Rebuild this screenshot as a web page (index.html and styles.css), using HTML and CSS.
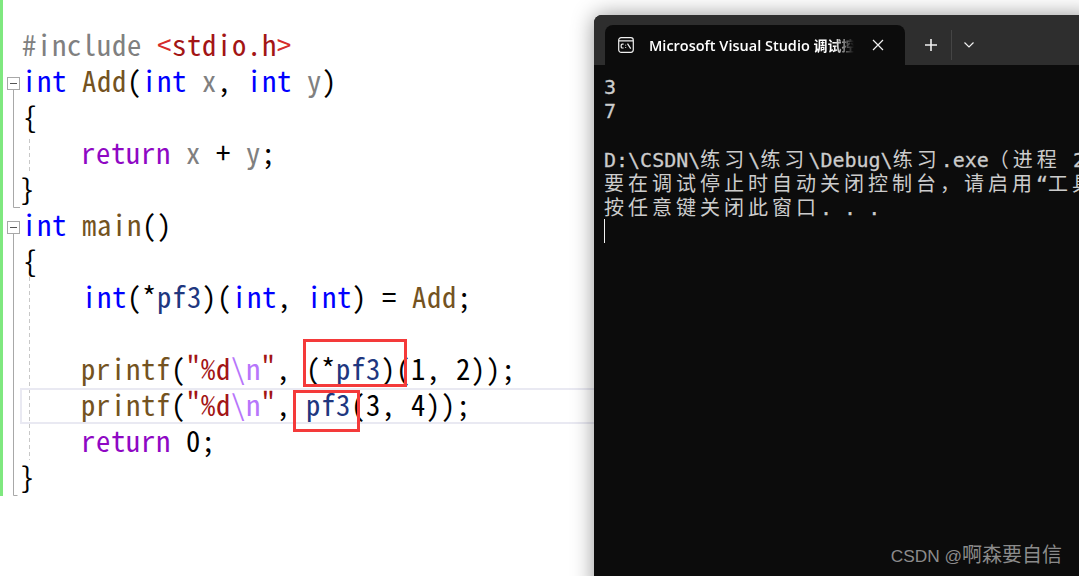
FILE: index.html
```html
<!DOCTYPE html>
<html lang="zh">
<head>
<meta charset="utf-8">
<title>Debug</title>
<link rel="stylesheet" href="styles.css">
</head>
<body>
<main class="desk">
  <section class="editor">
    <svg class="gutter" width="40" height="500" viewBox="0 0 40 500" aria-hidden="true">
      <rect x="7.5" y="77.5" width="12" height="12" class="fold"/>
      <path d="M10 83.5h7" class="dash"/>
      <path d="M13.5 90v117.500h6.500" class="fold"/>
      <rect x="7.5" y="221.500" width="12" height="12" class="fold"/>
      <path d="M10 227.500h7" class="dash"/>
      <path d="M13.500 234v261.500h4" class="fold"/>
      <path d="M29.500 139v33M29.500 270v190" class="guide"/>
    </svg>
    <div class="current"></div>
    <div class="line in-a"><span class="pp">#include</span> <span class="ang">&lt;</span><span class="str">stdio.h</span><span class="ang">&gt;</span></div>
    <div class="line in-b"><span class="kw">int</span> <span class="fn">Add</span>(<span class="kw">int</span> <span class="var">x</span>, <span class="kw">int</span> <span class="var">y</span>)</div>
    <div class="line in-c">{</div>
    <div class="line in-d"><span class="ret">return</span> <span class="var">x</span> + <span class="var">y</span>;</div>
    <div class="line in-z">}</div>
    <div class="line in-b"><span class="kw">int</span> <span class="fn">main</span>()</div>
    <div class="line in-c">{</div>
    <div class="line in-e"><span class="kw">int</span>(*<span class="ptr">pf3</span>)(<span class="kw">int</span>, <span class="kw">int</span>) = <span class="fn">Add</span>;</div>
    <div class="line"></div>
    <div class="line in-d"><span class="fn">printf</span>(<span class="str">"%d</span><span class="esc">\n</span><span class="str">"</span>, (*<span class="ptr">pf3</span>)(1, 2));</div>
    <div class="line in-d"><span class="fn">printf</span>(<span class="str">"%d</span><span class="esc">\n</span><span class="str">"</span>, <span class="ptr">pf3</span>(3, 4));</div>
    <div class="line in-d"><span class="ret">return</span> 0;</div>
    <div class="line in-z">}</div>
    <div class="mark mark-one"></div>
    <div class="mark mark-two"></div>
  </section>

  <section class="terminal">
    <header class="titlebar">
      <div class="tab">
        <svg class="tab-icon" width="16" height="16" viewBox="0 0 16 16" aria-hidden="true">
          <rect x="0.700" y="0.700" width="14.600" height="14.600" rx="2.500" class="ico"/>
          <path d="M1 3.800h14" class="ico"/>
          <path d="M5.600 7.200H4.200a1 1 0 0 0-1 1v1.800a1 1 0 0 0 1 1h1.400M7.600 7.800v.8M7.600 10v.8M9.500 6.600l3.200 5" class="ico"/>
        </svg>
        <span class="tab-title">Microsoft Visual Studio <span class="tab-zh">调试控制台</span></span>
        <svg class="tab-close" width="12" height="12" viewBox="0 0 12 12" aria-hidden="true"><path d="M1 1l10 10M11 1L1 11" class="ico"/></svg>
      </div>
      <svg class="tb-plus" width="14" height="14" viewBox="0 0 14 14" aria-hidden="true"><path d="M7 1v12M1 7h12" class="ico-bold"/></svg>
      <span class="tb-sep"></span>
      <svg class="tb-chev" width="12" height="8" viewBox="0 0 12 8" aria-hidden="true"><path d="M1.500 1.500L6 6l4.500-4.500" class="ico"/></svg>
    </header>
    <div class="console">
      <div class="row">3</div>
      <div class="row">7</div>
      <div class="row"></div>
      <div class="row">D:\CSDN\<span class="zh">练习</span>\<span class="zh">练习</span>\Debug\<span class="zh">练习</span>.exe<span class="zh">（进程</span> 2</div>
      <div class="row"><span class="zh">要在调试停止时自动关闭控制台，请启用</span>“<span class="zh">工具</span></div>
      <div class="row"><span class="zh">按任意键关闭此窗口</span>. . .</div>
      <div class="row"><span class="cursor"></span></div>
    </div>
  </section>

  <div class="watermark"><span class="wm-lat">CSDN @</span>啊森要自信</div>
</main>
</body>
</html>
```
FILE: styles.css
```css
* { box-sizing: border-box; }
html, body { margin: 0; height: 100%; background: #fff; overflow: hidden; }
.desk { position: relative; width: 1079px; height: 576px; overflow: hidden; background: #fff; }

.editor {
  position: relative;
  height: 496px;
  padding-top: 26px;
  border-left: 3px solid #7fe87f;
  margin-right: 480px;
  font-family: "Noto Sans Mono CJK SC", "Liberation Mono", monospace;
  font-size: 28.6px;
  letter-spacing: 0.7px;
  color: #000;
}
.gutter { position: absolute; left: -3px; top: 0; }
.fold { fill: none; stroke: #a8a8a8; stroke-width: 1; }
.dash { fill: none; stroke: #555; stroke-width: 1; }
.guide { fill: none; stroke: #c8c8c8; stroke-width: 1; stroke-dasharray: 4 3; }
.current {
  position: absolute;
  left: 17px; top: 388px;
  width: 574px; height: 36px;
  border: solid #e9e9f2;
  border-width: 2px 0 2px 2px;
}
.line { position: relative; height: 36px; line-height: 36px; white-space: pre; }
.in-z { padding-left: 17px; }
.in-a { padding-left: 19px; }
.in-b { padding-left: 19px; }
.in-c { padding-left: 20px; }
.in-d { padding-left: 78px; }
.in-e { padding-left: 79px; }
.pp, .var { color: #808080; }
.ang { color: #d62b2b; }
.str { color: #a31515; }
.esc { color: #b776fb; }
.kw { color: #0000ff; }
.fn { color: #74531f; }
.ret { color: #8f08c4; }
.ptr { color: #1f377f; }
.mark { position: absolute; border: 3px solid #f43a3a; }
.mark-one { left: 300px; top: 339px; width: 104px; height: 48px; }
.mark-two { left: 290px; top: 390px; width: 67px; height: 42px; }

.terminal {
  position: absolute;
  left: 594px; top: 15px;
  width: 500px; height: 580px;
  background: #0c0c0c;
  border-radius: 8px 0 0 0;
  box-shadow: 0 0 22px rgba(0, 0, 0, .42);
  overflow: hidden;
}
.titlebar {
  display: flex;
  align-items: center;
  height: 50px;
  padding: 10px 0 0 11px;
  background: #2e2e2e;
  color: #fff;
}
.tab {
  display: flex;
  align-items: center;
  width: 300px;
  height: 40px;
  padding: 0 20px 0 13px;
  background: #0c0c0c;
  border-radius: 8px 8px 0 0;
}
.tab-icon { flex: none; margin-right: 15px; }
.tab-title {
  flex: none;
  width: 205px;
  margin-bottom: 1px;
  overflow: hidden;
  white-space: nowrap;
  font: 600 14.500px "Open Sans", "Noto Sans CJK SC", sans-serif;
  color: #fff;
  -webkit-mask-image: linear-gradient(to right, #000 90%, transparent);
  mask-image: linear-gradient(to right, #000 90%, transparent);
}
.tab-zh { font-size: 14px; font-weight: 700; }
.tab-close { flex: none; margin-left: 18px; }
.ico { fill: none; stroke: #f0f0f0; stroke-width: 1.200; }
.ico-bold { fill: none; stroke: #f0f0f0; stroke-width: 1.600; }
.tb-plus { margin-left: 19px; }
.tb-sep { width: 1px; height: 30px; margin-left: 13px; background: #454545; }
.tb-chev { margin-left: 11px; }
.console {
  padding: 10px 0 0 10px;
  font-family: "DejaVu Sans Mono", "Noto Sans CJK SC", monospace;
  font-size: 20px;
  color: #cccccc;
  -webkit-text-stroke: 0.3px #cccccc;
}
.row { height: 24px; line-height: 24px; white-space: pre; }
.zh { font-family: "Noto Sans CJK SC", sans-serif; font-size: 20px; letter-spacing: 4px; -webkit-text-stroke: 0; }
.cursor { display: block; width: 1px; height: 24px; background: #f2f2f2; }

.watermark {
  position: absolute;
  right: 17px; bottom: 9px;
  font: 20px "Noto Sans CJK SC", sans-serif;
  line-height: 22px;
  color: #8b8b8b;
}
.wm-lat { font: 17.300px "Liberation Sans", sans-serif; }
```
